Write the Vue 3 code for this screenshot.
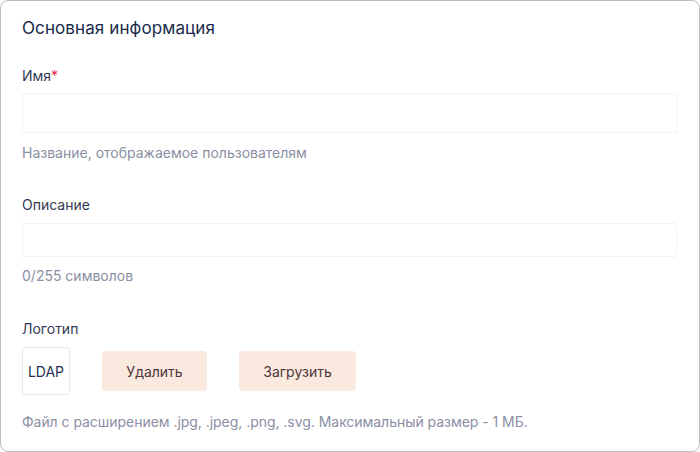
<script setup>
const hint = "Файл с расширением .jpg, .jpeg, .png, .svg. Максимальный размер - 1 МБ.";
</script>

<template>
  <div class="card">
    <h2 class="title">Основная информация</h2>

    <div class="field name-field">
      <label class="label">Имя<span class="req">*</span></label>
      <input class="input name-input" type="text" />
      <div class="hint">Название, отображаемое пользователям</div>
    </div>

    <div class="field desc-field">
      <label class="label">Описание</label>
      <input class="input desc-input" type="text" />
      <div class="hint">0/255 символов</div>
    </div>

    <div class="field logo-field">
      <label class="label">Логотип</label>
      <div class="logo-row">
        <div class="logo">LDAP</div>
        <button class="btn btn-delete" type="button">Удалить</button>
        <button class="btn btn-upload" type="button">Загрузить</button>
      </div>
      <div class="hint logo-hint">{{ hint }}</div>
    </div>
  </div>
</template>

<style>
html,
body {
  margin: 0;
  background: #fff;
}
</style>

<style scoped>
.card {
  box-sizing: border-box;
  width: 700px;
  height: 452px;
  padding: 17px 22px 0 21px;
  background: #fff;
  border: 1px solid #bdbdbd;
  border-radius: 8px;
  font-family: Inter, "Noto Sans", sans-serif;
  color: #1c2540;
}
.title {
  margin: 0;
  font-size: 17px;
  line-height: 20px;
  font-weight: 400;
  letter-spacing: 0.1px;
  color: #1a2a4a;
}
.field {
  display: flex;
  flex-direction: column;
}
.name-field {
  margin-top: 28px;
}
.desc-field {
  margin-top: 32px;
}
.logo-field {
  margin-top: 33px;
}
.label {
  font-size: 14px;
  line-height: 20px;
  color: #333a55;
}
.req {
  color: #e8264f;
}
.input {
  box-sizing: border-box;
  width: 655px;
  padding: 0 12px;
  background: #fff;
  border: 1px solid #f3f3f5;
  border-radius: 2px;
  outline: none;
}
.name-input {
  height: 40px;
  margin-top: 7px;
}
.desc-input {
  height: 34px;
  margin-top: 8px;
}
.hint {
  font-size: 14px;
  line-height: 20px;
  color: #8a8fa3;
}
.name-input + .hint {
  margin-top: 10px;
}
.desc-input + .hint {
  margin-top: 9px;
}
.logo-row {
  display: flex;
  align-items: center;
  margin-top: 8px;
}
.logo {
  box-sizing: border-box;
  display: flex;
  align-items: center;
  justify-content: center;
  width: 48px;
  height: 48px;
  border: 1px solid #e9eaf0;
  border-radius: 4px;
  font-size: 14px;
  color: #252e52;
}
.btn {
  box-sizing: border-box;
  height: 40px;
  padding: 0;
  border: none;
  border-radius: 4px;
  background: #fae9df;
  color: #4f353b;
  font-family: inherit;
  font-size: 14px;
}
.btn-delete {
  width: 105px;
  margin-left: 32px;
}
.btn-upload {
  width: 117px;
  margin-left: 32px;
}
.logo-hint {
  margin-top: 17px;
  letter-spacing: -0.04px;
}
</style>
